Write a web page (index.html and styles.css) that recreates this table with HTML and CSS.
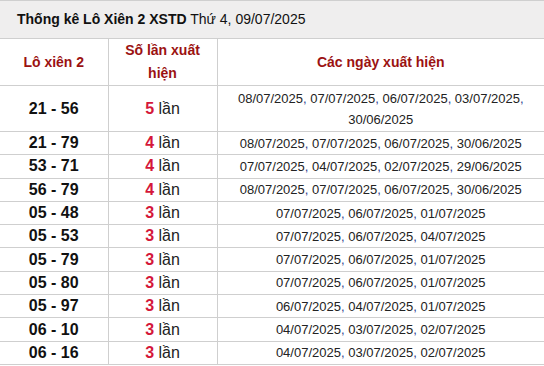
FILE: index.html
```html
<!DOCTYPE html>
<html lang="vi">
<head>
<meta charset="utf-8">
<link rel="stylesheet" href="styles.css">
</head>
<body>
<div class="title"><b>Thống kê Lô Xiên 2 XSTD</b> Thứ 4, 09/07/2025</div>
<table class="stats">
  <colgroup><col class="c1"><col class="c2"><col class="c3"></colgroup>
  <tr class="head">
    <th>Lô xiên 2</th>
    <th>Số lần xuất hiện</th>
    <th>Các ngày xuất hiện</th>
  </tr>
  <tr class="big">
    <td class="pair">21 - 56</td>
    <td class="cnt"><b>5</b> lần</td>
    <td class="dates">08/07/2025<i>,</i> 07/07/2025<i>,</i> 06/07/2025<i>,</i> 03/07/2025<i>,</i> 30/06/2025</td>
  </tr>
  <tr class="r"><td class="pair">21 - 79</td><td class="cnt"><b>4</b> lần</td><td class="dates">08/07/2025<i>,</i> 07/07/2025<i>,</i> 06/07/2025<i>,</i> 30/06/2025</td></tr>
  <tr class="r"><td class="pair">53 - 71</td><td class="cnt"><b>4</b> lần</td><td class="dates">07/07/2025<i>,</i> 04/07/2025<i>,</i> 02/07/2025<i>,</i> 29/06/2025</td></tr>
  <tr class="r"><td class="pair">56 - 79</td><td class="cnt"><b>4</b> lần</td><td class="dates">08/07/2025<i>,</i> 07/07/2025<i>,</i> 06/07/2025<i>,</i> 30/06/2025</td></tr>
  <tr class="r"><td class="pair">05 - 48</td><td class="cnt"><b>3</b> lần</td><td class="dates">07/07/2025<i>,</i> 06/07/2025<i>,</i> 01/07/2025</td></tr>
  <tr class="r"><td class="pair">05 - 53</td><td class="cnt"><b>3</b> lần</td><td class="dates">07/07/2025<i>,</i> 06/07/2025<i>,</i> 04/07/2025</td></tr>
  <tr class="r"><td class="pair">05 - 79</td><td class="cnt"><b>3</b> lần</td><td class="dates">07/07/2025<i>,</i> 06/07/2025<i>,</i> 01/07/2025</td></tr>
  <tr class="r"><td class="pair">05 - 80</td><td class="cnt"><b>3</b> lần</td><td class="dates">07/07/2025<i>,</i> 06/07/2025<i>,</i> 01/07/2025</td></tr>
  <tr class="r"><td class="pair">05 - 97</td><td class="cnt"><b>3</b> lần</td><td class="dates">06/07/2025<i>,</i> 04/07/2025<i>,</i> 01/07/2025</td></tr>
  <tr class="r"><td class="pair">06 - 10</td><td class="cnt"><b>3</b> lần</td><td class="dates">04/07/2025<i>,</i> 03/07/2025<i>,</i> 02/07/2025</td></tr>
  <tr class="r"><td class="pair">06 - 16</td><td class="cnt"><b>3</b> lần</td><td class="dates">04/07/2025<i>,</i> 03/07/2025<i>,</i> 02/07/2025</td></tr>
</table>
</body>
</html>
```
FILE: styles.css
```css
html, body {
  margin: 0;
  padding: 0;
  background: #fff;
  font-family: "Liberation Sans", Arial, sans-serif;
  color: #111;
}
.title {
  box-sizing: border-box;
  height: 39px;
  border-top: 1px solid #cfcfcf;
  border-bottom: 1px solid #cfcfcf;
  background: #efeeee;
  font-size: 14px;
  line-height: 37px;
  padding-left: 17px;
  color: #111;
}
.title b { font-weight: bold; }
.stats {
  width: 544px;
  border-collapse: collapse;
  table-layout: fixed;
}
.c1 { width: 108px; }
.c2 { width: 109px; }
.stats th, .stats td {
  border: 1px solid #cfcfcf;
  text-align: center;
  vertical-align: middle;
  padding: 0;
}
.stats tr > :first-child { border-left: none; }
.stats tr > :last-child { border-right: none; }
.stats tr.head th { border-top: none; }
.head th {
  height: 45px;
  font-size: 14px;
  line-height: 23px;
  font-weight: bold;
  color: #9b1212;
  padding: 0 8px;
}
.big td { height: 45px; }
.r td { height: 22.3px; }
.pair {
  font-size: 16px;
  font-weight: bold;
  color: #111;
}
.cnt {
  font-size: 16px;
  color: #222;
}
.cnt b { color: #d4173a; }
.dates {
  font-size: 13px;
  line-height: 21px;
  color: #222;
  padding: 0 10px !important;
}
.dates i { font-style: normal; color: #2f3f8f; }
```
